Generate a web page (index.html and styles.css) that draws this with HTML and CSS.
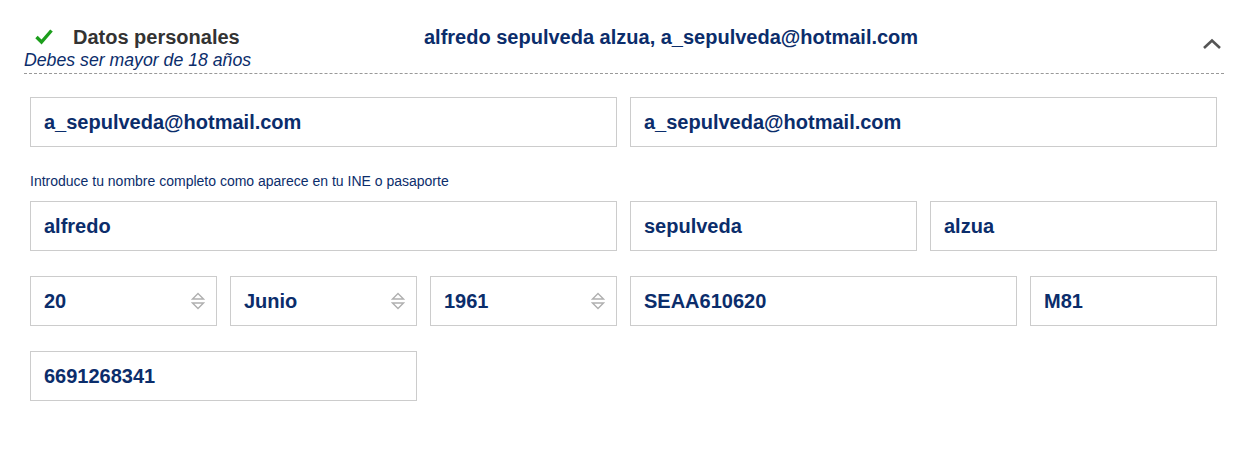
FILE: index.html
```html
<!DOCTYPE html>
<html lang="es">
<head>
<meta charset="utf-8">
<link rel="stylesheet" href="styles.css">
</head>
<body>
<section class="panel">
  <header class="panel-head">
    <div class="head-left">
      <div class="head-title">
        <svg class="check" width="18" height="16" viewBox="0 0 18 16"><path d="M1.5 8 L6.5 13 L16.5 1.5" fill="none" stroke="#1c9e1c" stroke-width="3.4"/></svg>
        <span class="title">Datos personales</span>
      </div>
      <div class="subtitle">Debes ser mayor de 18 años</div>
    </div>
    <div class="summary">alfredo sepulveda alzua, a_sepulveda@hotmail.com</div>
    <svg class="chevron" width="20" height="12" viewBox="0 0 20 12"><path d="M2 10 L10 2.5 L18 10" fill="none" stroke="#555" stroke-width="2.6"/></svg>
  </header>
  <div class="form">
    <div class="field c6">a_sepulveda@hotmail.com</div>
    <div class="field c6">a_sepulveda@hotmail.com</div>
    <div class="hint c12">Introduce tu nombre completo como aparece en tu INE o pasaporte</div>
    <div class="field c6">alfredo</div>
    <div class="field c3">sepulveda</div>
    <div class="field c3">alzua</div>
    <div class="field c2 select">20<svg class="spin" width="14" height="20" viewBox="0 0 14 20"><path d="M7 2.5 L12.5 8 H1.5 Z M7 17.5 L12.5 12 H1.5 Z" fill="none" stroke="#b0b0b0" stroke-width="1.4"/></svg></div>
    <div class="field c2 select">Junio<svg class="spin" width="14" height="20" viewBox="0 0 14 20"><path d="M7 2.5 L12.5 8 H1.5 Z M7 17.5 L12.5 12 H1.5 Z" fill="none" stroke="#b0b0b0" stroke-width="1.4"/></svg></div>
    <div class="field c2 select">1961<svg class="spin" width="14" height="20" viewBox="0 0 14 20"><path d="M7 2.5 L12.5 8 H1.5 Z M7 17.5 L12.5 12 H1.5 Z" fill="none" stroke="#b0b0b0" stroke-width="1.4"/></svg></div>
    <div class="field c4">SEAA610620</div>
    <div class="field c2">M81</div>
    <div class="field c4 last">6691268341</div>
  </div>
</section>
</body>
</html>
```
FILE: styles.css
```css
* { box-sizing: border-box; }
body {
  margin: 0;
  background: #fff;
  font-family: "Liberation Sans", Arial, sans-serif;
}
.panel {
  width: 1200px;
  margin-left: 24px;
}
.panel-head {
  display: flex;
  align-items: flex-start;
  height: 74px;
  padding-top: 26px;
  border-bottom: 1px dashed #999;
}
.head-left {
  width: 400px;
}
.head-title {
  display: flex;
  align-items: center;
  height: 22px;
}
.check {
  margin-left: 11px;
}
.title {
  margin-left: 20px;
  font-size: 20px;
  font-weight: bold;
  color: #333;
}
.subtitle {
  margin-top: 2px;
  font-size: 17.7px;
  font-style: italic;
  color: #0b2d6b;
  line-height: 20px;
}
.summary {
  font-size: 20px;
  font-weight: bold;
  color: #0b2d6b;
  line-height: 22px;
  flex: 1;
}
.chevron {
  margin-top: 12px;
  margin-right: 2px;
}
.form {
  display: grid;
  grid-template-columns: repeat(12, 87px);
  column-gap: 13px;
  row-gap: 25px;
  padding: 23px 6px 0;
}
.field {
  height: 50px;
  border: 1px solid #ccc;
  display: flex;
  align-items: center;
  justify-content: space-between;
  padding: 0 11px 0 13px;
  font-size: 20px;
  font-weight: bold;
  color: #0b2d6b;
}
.c2 { grid-column: span 2; }
.c3 { grid-column: span 3; }
.c4 { grid-column: span 4; }
.c6 { grid-column: span 6; }
.c12 { grid-column: span 12; }
.hint {
  font-size: 14px;
  color: #0b2d6b;
  margin-top: 1px;
  margin-bottom: -13px;
  line-height: 16px;
}
.spin { flex: none; }
```
